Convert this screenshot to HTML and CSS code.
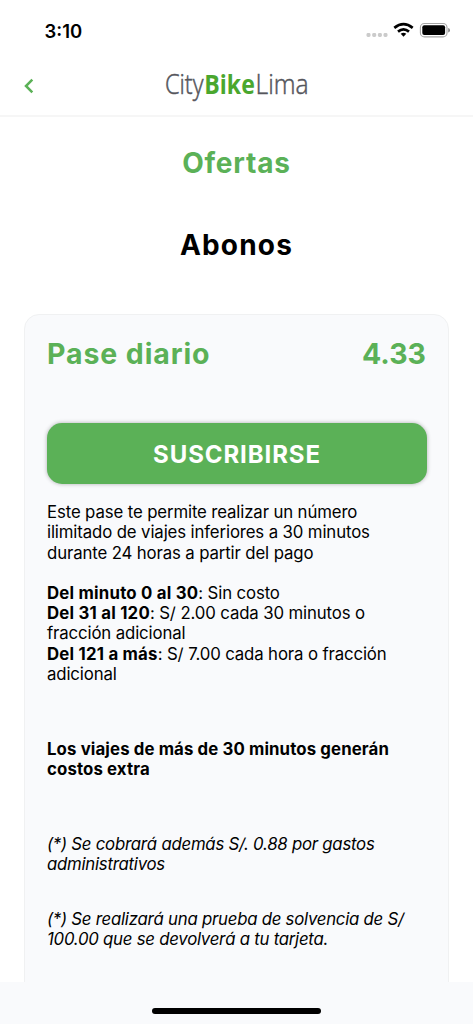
FILE: index.html
```
<!DOCTYPE html>
<html lang="es">
<head>
<meta charset="utf-8">
<title>CityBikeLima</title>
<link rel="stylesheet" href="styles.css">
</head>
<body>
<div class="screen">
  <header class="header">
    <div class="status">
      <span class="time">3:10</span>
      <svg class="indicators" width="88" height="20" viewBox="0 0 88 20">
        <g fill="#cbcbcb"><rect x="1.5" y="13" width="4" height="4" rx="1.4"/><rect x="7.2" y="13" width="4" height="4" rx="1.4"/><rect x="12.9" y="13" width="4" height="4" rx="1.4"/><rect x="18.5" y="13" width="4" height="4" rx="1.4"/></g>
        <g fill="none" stroke="#000" stroke-width="2.7"><path d="M29.3 7.9Q38.5 .5 47.7 7.9"/><path d="M33 11.6Q38.5 7.1 44 11.6"/></g>
        <path d="M35.7 13.7Q38.5 11.7 41.3 13.7L38.5 16.7Z"/>
        <rect x="55.4" y="3.5" width="26.6" height="13.4" rx="4" fill="none" stroke="#a5a5a5" stroke-width="1.1"/>
        <rect x="57.3" y="5.3" width="22.8" height="9.8" rx="2"/>
        <path d="M83.2 8Q85 8.5 85 10.2T83.2 12.4Z" fill="#888"/>
      </svg>
    </div>
    <nav class="nav">
      <svg class="back" width="14" height="18" viewBox="0 0 14 18"><path d="M10.3 2.7L4 9L10.3 15.3" fill="none" stroke="#5bb157" stroke-width="2.5"/></svg>
      <svg class="logo" width="150" height="46" viewBox="0 -5 150 46">
        <text x="2" y="25" textLength="38.5" lengthAdjust="spacingAndGlyphs" class="logo-light">City</text>
        <text x="41.3" y="25" textLength="50.5" lengthAdjust="spacingAndGlyphs" class="logo-bold">Bike</text>
        <text x="92.6" y="25" textLength="53" lengthAdjust="spacingAndGlyphs" class="logo-light">Lima</text>
      </svg>
    </nav>
  </header>
  <main class="content">
    <h1 class="title">Ofertas</h1>
    <h2 class="subtitle">Abonos</h2>
    <section class="card">
      <div class="card-head"><span class="name">Pase diario</span><span class="price">4.33</span></div>
      <button class="subscribe">SUSCRIBIRSE</button>
      <p class="text">Este pase te permite realizar un número<br>ilimitado de viajes inferiores a 30 minutos<br>durante 24 horas a partir del pago</p>
      <p class="text rates"><b>Del minuto 0 al 30</b>: Sin costo<br><b>Del 31 al 120</b>: S/ 2.00 cada 30 minutos o<br>fracción adicional<br><b>Del 121 a más</b>: S/ 7.00 cada hora o fracción<br>adicional</p>
      <p class="text warning">Los viajes de más de 30 minutos generán<br>costos extra</p>
      <p class="text note fee">(*) Se cobrará además S/. 0.88 por gastos<br>administrativos</p>
      <p class="text note deposit">(*) Se realizará una prueba de solvencia de S/<br>100.00 que se devolverá a tu tarjeta.</p>
    </section>
  </main>
  <footer class="footer"><div class="home-bar"></div></footer>
</div>
</body>
</html>
```
FILE: styles.css
```
* { box-sizing: border-box; }
body { margin: 0; background: #fff; color: #000; font-family: Inter, "Liberation Sans", sans-serif; }
.screen { width: 473px; height: 1024px; display: flex; flex-direction: column; overflow: hidden; }
.header { height: 117px; flex: none; border-bottom: 2px solid #f6f6f6; }
.status { height: 60px; padding: 20px 20px 0 44.5px; display: flex; justify-content: space-between; align-items: flex-start; }
.time { font-size: 18.5px; font-weight: 600; line-height: 22px; }
.indicators { display: block; }
.nav { height: 55px; padding-left: 22px; display: flex; }
.back { margin-top: 17px; margin-right: 127px; }
.logo { margin-top: 4px; }
.logo text { font-family: "Open Sans", sans-serif; font-size: 27px; }
.logo .logo-light { font-weight: 300; fill: #55565c; stroke: #55565c; stroke-width: .5px; }
.logo .logo-bold { font-weight: 700; fill: #4aa72e; }
.content { flex: 1; min-height: 0; overflow: hidden; }
.title, .subtitle { margin: 0; text-align: center; font-size: 28px; font-weight: 700; line-height: 34px; }
.title { margin-top: 29px; color: #5bb157; letter-spacing: .8px; }
.subtitle { margin-top: 48px; letter-spacing: 1.2px; }
.card { margin: 52px 24px 0; height: 720px; padding: 22px 22px 0; border: 1px solid #f0f1f2; border-radius: 15px; background: #f9fafc; }
.card-head { display: flex; justify-content: space-between; height: 34px; line-height: 34px; font-size: 28.5px; font-weight: 700; color: #5bb157; }
.name { letter-spacing: .9px; }
.subscribe { display: block; width: 380px; height: 61px; margin: 52px 0 18px; padding: 0; border: 0; border-radius: 15px; background: #5bb157; color: #fff; font: 700 24px/63px Inter, sans-serif; letter-spacing: .9px; box-shadow: 0 0 4px rgba(0,0,0,.3); }
.text { margin: 0; font-size: 16.8px; line-height: 20.25px; letter-spacing: -.13px; }
.rates { margin-top: 20px; }
.rates b { letter-spacing: .22px; }
.warning { margin-top: 55px; font-weight: 700; letter-spacing: .12px; }
.fee { margin-top: 54px; }
.deposit { margin-top: 35px; }
.note { font-style: italic; letter-spacing: -.25px; }
.footer { height: 42px; flex: none; padding-top: 26px; background: #f9fafc; }
.home-bar { width: 169px; height: 6px; border-radius: 3px; margin: 0 auto; background: #000; }
```
